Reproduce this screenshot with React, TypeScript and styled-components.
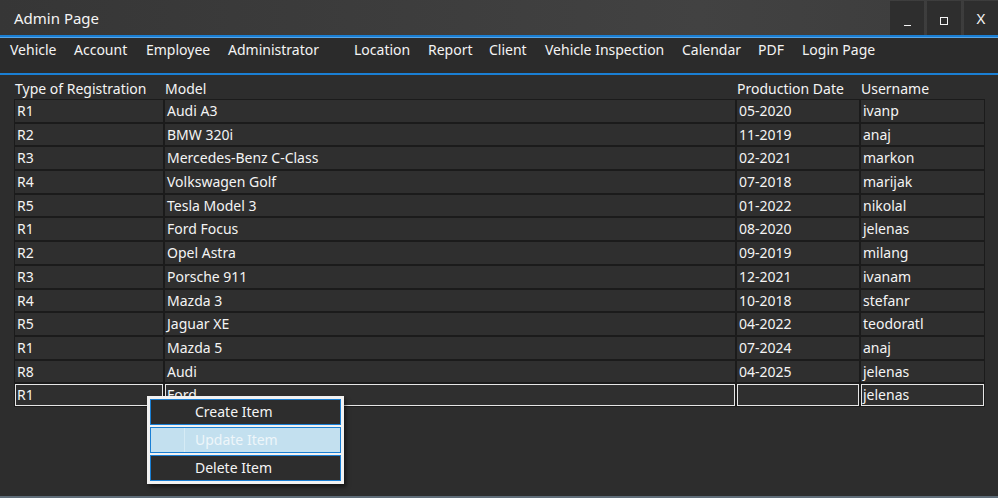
import styled, { createGlobalStyle } from "styled-components";

const GlobalStyle = createGlobalStyle`
    html, body {
        margin: 0;
        padding: 0;
        background: #2d2d2d;
    }
    body {
        font-family: "Noto Sans", "Open Sans", sans-serif;
        color: #f4f4f4;
    }
`

const Window = styled.div`
    position: relative;
    width: 998px;
    height: 498px;
    overflow: hidden;
    background: #2d2d2d;
    border-bottom: 2px solid #5f6d79;
    box-sizing: border-box;
`
const TitleBar = styled.div`
    display: flex;
    align-items: stretch;
    height: 35px;
    background: linear-gradient(90deg, #363636, #424242 70%, #3c3c3c);
    border-bottom: 2px solid #1a7fd4;
`
const Title = styled.div`
    flex: 1;
    display: flex;
    align-items: center;
    padding-left: 14px;
    padding-top: 1px;
    font-size: 15px;
`
const WindowButtons = styled.div`
    display: flex;
    gap: 3px;
    padding-top: 1px;
`
const WindowButton = styled.div`
    width: 34px;
    display: flex;
    align-items: center;
    justify-content: center;
    background: #2e2e2e;
    font-size: 15px;
`
const MinGlyph = styled.span`
    width: 7px;
    height: 1px;
    margin-top: 14px;
    background: #f4f4f4;
`
const MaxGlyph = styled.span`
    width: 6px;
    height: 6px;
    margin-top: 5px;
    border: 1px solid #f4f4f4;
`
const MenuBar = styled.div`
    display: flex;
    align-items: flex-start;
    height: 38px;
    padding: 2px 0 0 10px;
    box-sizing: border-box;
    border-top: 1px solid #5aa6e6;
    border-bottom: 2px solid #1a7fd4;
    background: #2b2b2b;
`
const MenuItem = styled.div<{ $width: number }>`
    width: ${p => p.$width}px;
    font-size: 14px;
    line-height: 20px;
    white-space: nowrap;
`
const Content = styled.div`
    padding: 4px 0 0 14px;
`
const Grid = styled.div`
    display: grid;
    grid-template-columns: 150px 572px 124px 125px;
    width: 971px;
`
const HeaderCell = styled.div`
    height: 20px;
    line-height: 20px;
    padding-left: 1px;
    font-size: 14px;
    white-space: nowrap;
`
const Cell = styled.div<{ $editing?: boolean }>`
    height: 23.7px;
    box-sizing: border-box;
    padding-left: 2px;
    line-height: 21px;
    font-size: 14px;
    white-space: nowrap;
    overflow: hidden;
    background: #2f2f2f;
    border: 1px solid #1b1b1b;
    box-shadow: ${p => (p.$editing ? "inset 0 0 0 1px #e6e6e6" : "none")};
`
const ContextMenu = styled.div`
    position: absolute;
    left: 147px;
    top: 396px;
    width: 197px;
    box-sizing: border-box;
    padding: 3px;
    display: flex;
    flex-direction: column;
    gap: 2px;
    background: #f2f2f2;
    box-shadow: 2px 3px 4px rgba(0, 0, 0, 0.5);
`
const MenuEntry = styled.div<{ $active?: boolean }>`
    display: flex;
    height: 26px;
    box-sizing: border-box;
    border: 1px solid #1a7fd4;
    background: ${p => (p.$active ? "#c3e0ef" : "#2d2d2d")};
    color: ${p => (p.$active ? "#eef6fa" : "#f4f4f4")};
    font-size: 14px;
    line-height: 23px;
`
const EntryIcon = styled.div<{ $active?: boolean }>`
    width: 33px;
    border-right: 1px solid ${p => (p.$active ? "#d6ebf5" : "transparent")};
`
const EntryText = styled.div`
    padding-left: 10px;
`

const menuItems: [string, number][] = [
    ["Vehicle", 64],
    ["Account", 72],
    ["Employee", 82],
    ["Administrator", 126],
    ["Location", 74],
    ["Report", 61],
    ["Client", 56],
    ["Vehicle Inspection", 137],
    ["Calendar", 76],
    ["PDF", 44],
    ["Login Page", 90],
]

const rows: [string, string, string, string][] = [
    ["R1", "Audi A3", "05-2020", "ivanp"],
    ["R2", "BMW 320i", "11-2019", "anaj"],
    ["R3", "Mercedes-Benz C-Class", "02-2021", "markon"],
    ["R4", "Volkswagen Golf", "07-2018", "marijak"],
    ["R5", "Tesla Model 3", "01-2022", "nikolal"],
    ["R1", "Ford Focus", "08-2020", "jelenas"],
    ["R2", "Opel Astra", "09-2019", "milang"],
    ["R3", "Porsche 911", "12-2021", "ivanam"],
    ["R4", "Mazda 3", "10-2018", "stefanr"],
    ["R5", "Jaguar XE", "04-2022", "teodoratl"],
    ["R1", "Mazda 5", "07-2024", "anaj"],
    ["R8", "Audi", "04-2025", "jelenas"],
]

const headers = ["Type of Registration", "Model", "Production Date", "Username"]

export default function App() {
    return (
        <>
            <GlobalStyle />
            <Window>
                <TitleBar>
                    <Title>Admin Page</Title>
                    <WindowButtons>
                        <WindowButton><MinGlyph /></WindowButton>
                        <WindowButton><MaxGlyph /></WindowButton>
                        <WindowButton>X</WindowButton>
                    </WindowButtons>
                </TitleBar>
                <MenuBar>
                    {menuItems.map(([label, width]) => (
                        <MenuItem key={label} $width={width}>{label}</MenuItem>
                    ))}
                </MenuBar>
                <Content>
                    <Grid>
                        {headers.map(h => <HeaderCell key={h}>{h}</HeaderCell>)}
                        {rows.map((r, i) => r.map((v, j) => <Cell key={i + "-" + j}>{v}</Cell>))}
                        {/* new row being edited */}
                        <Cell $editing>R1</Cell>
                        <Cell $editing>Ford</Cell>
                        <Cell $editing></Cell>
                        <Cell $editing>jelenas</Cell>
                    </Grid>
                </Content>
                <ContextMenu>
                    <MenuEntry><EntryIcon /><EntryText>Create Item</EntryText></MenuEntry>
                    <MenuEntry $active><EntryIcon $active /><EntryText>Update Item</EntryText></MenuEntry>
                    <MenuEntry><EntryIcon /><EntryText>Delete Item</EntryText></MenuEntry>
                </ContextMenu>
            </Window>
        </>
    )
}
